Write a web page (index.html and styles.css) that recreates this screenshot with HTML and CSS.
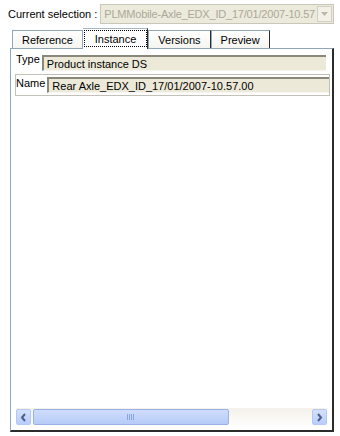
FILE: index.html
```html
<!DOCTYPE html>
<html lang="en">
<head>
  <meta charset="UTF-8">
  <title>Current selection</title>
  <link rel="stylesheet" href="styles.css">
</head>
<body>
  <!-- Selection combo -->
  <div class="selection">
    <label for="currentSel">Current selection :</label>
    <div class="combo" id="currentSel">
      <span class="combo-text">PLMMobile-Axle_EDX_ID_17/01/2007-10.57</span>
      <span class="combo-btn">
        <svg width="7" height="4" viewBox="0 0 7 4"><path d="M0 0h7L3.5 4z" fill="#b9b7ab"/></svg>
      </span>
    </div>
  </div>

  <!-- Tab strip -->
  <div class="tabs">
    <div class="tab first">Reference</div>
    <div class="tab active"><span class="focus">Instance</span></div>
    <div class="tab">Versions</div>
    <div class="tab">Preview</div>
  </div>

  <!-- Instance page -->
  <div class="panel">
    <div class="row">
      <span class="row-label">Type</span>
      <div class="field type-field">Product instance DS</div>
    </div>
    <div class="row selected">
      <span class="row-label">Name</span>
      <div class="field">Rear Axle_EDX_ID_17/01/2007-10.57.00</div>
    </div>
    <div class="spacer"></div>
    <div class="hscroll">
      <div class="sb-btn">
        <svg width="7" height="9" viewBox="0 0 7 9"><path d="M5 1L2 4.5 5 8" fill="none" stroke="#4d6185" stroke-width="2"/></svg>
      </div>
      <div class="sb-track">
        <div class="sb-thumb">
          <svg width="8" height="6" viewBox="0 0 8 6"><path d="M0.5 0v6M2.5 0v6M4.5 0v6M6.5 0v6" stroke="#8aa4e0" stroke-width="1"/></svg>
        </div>
      </div>
      <div class="sb-btn">
        <svg width="7" height="9" viewBox="0 0 7 9"><path d="M2 1l3 3.5L2 8" fill="none" stroke="#4d6185" stroke-width="2"/></svg>
      </div>
    </div>
  </div>
</body>
</html>
```
FILE: styles.css
```css
body {
  margin: 0;
  background: #fff;
  font-family: "Liberation Sans", Arial, sans-serif;
  font-size: 11px;
  color: #000;
}
.selection {
  display: flex;
  align-items: center;
  gap: 3px;
  padding: 4px 0 0 8px;
  height: 20px;
}
.combo {
  display: flex;
  align-items: center;
  width: 234px;
  height: 20px;
  box-sizing: border-box;
  border: 1px solid #c9c7ba;
  background: #ebeadb;
  padding: 0 1px 0 3px;
}
.combo-text {
  flex: 1;
  min-width: 0;
  color: #aca899;
  white-space: nowrap;
  letter-spacing: -0.2px;
}
.combo-btn {
  display: flex;
  align-items: center;
  justify-content: center;
  flex: none;
  width: 15px;
  height: 16px;
  box-sizing: border-box;
  border: 1px solid #d2d0c4;
  background: #f2f1e8;
}
.tabs {
  display: flex;
  align-items: flex-end;
  height: 20px;
  margin-top: 4px;
  padding-left: 12px;
}
.tab {
  height: 18px;
  box-sizing: border-box;
  padding: 0 9px;
  line-height: 18px;
  border-top: 1px solid #91a7b8;
  border-left: 1px solid #91a7b8;
  border-right: 1px solid #2c2c2c;
  background: linear-gradient(#fff, #f4f4f0);
  white-space: nowrap;
}
.tab.first {
  border-right-color: #91a7b8;
}
.tab.active {
  position: relative;
  z-index: 1;
  height: 21px;
  margin-bottom: -1px;
  padding: 1px 0 2px 1px;
  background: #fff;
  border-left: none;
  border-top-color: #a7b7c6;
}
.focus {
  display: block;
  height: 17px;
  line-height: 16px;
  box-sizing: border-box;
  padding: 0 10px;
  border: 1px dotted #000;
}
.panel {
  display: flex;
  flex-direction: column;
  margin-left: 10px;
  width: 324px;
  height: 384px;
  box-sizing: border-box;
  border-top: 1px solid #91a7b8;
  border-left: 1px solid #91a7b8;
  border-right: 2px solid #2c2c2c;
  border-bottom: 2px solid #2c2c2c;
  padding: 3px 2px 5px 4px;
  background: #fff;
}
.row {
  display: flex;
  align-items: flex-start;
  gap: 2px;
  height: 22px;
  box-sizing: border-box;
  border: 1px solid transparent;
  padding: 2px 0 2px 0;
}
.row.selected {
  border-color: #c4c2b8;
}
.row-label {
  line-height: 12px;
  margin-top: -2px;
}
.row.selected .row-label {
  margin-top: 0;
}
.field {
  flex: 1;
  height: 16px;
  box-sizing: border-box;
  border-top: 2px solid #8a887b;
  border-left: 2px solid #8a887b;
  border-bottom: 1px solid #f7f6f0;
  background: #ece9d8;
  padding-left: 3px;
  line-height: 14px;
  white-space: nowrap;
  overflow: hidden;
}
.type-field {
  margin-right: 3px;
}
.spacer {
  flex: 1;
}
.hscroll {
  display: flex;
  height: 17px;
  margin: 0 3px 0 1px;
  background: linear-gradient(#f3f1ea, #fdfdfa);
}
.sb-btn {
  display: flex;
  align-items: center;
  justify-content: center;
  width: 15px;
  height: 16px;
  margin-top: 1px;
  box-sizing: border-box;
  border: 1px solid #b4c8f6;
  border-radius: 2px;
  background: linear-gradient(#d4e1ff, #b9cdfb);
}
.sb-track {
  flex: 1;
  padding: 1px 2px 0 2px;
}
.sb-thumb {
  display: flex;
  align-items: center;
  justify-content: center;
  width: 196px;
  height: 16px;
  box-sizing: border-box;
  border: 1px solid #98b1e9;
  border-radius: 2px;
  background: linear-gradient(#cfddfd, #b6cbf7);
}
```
